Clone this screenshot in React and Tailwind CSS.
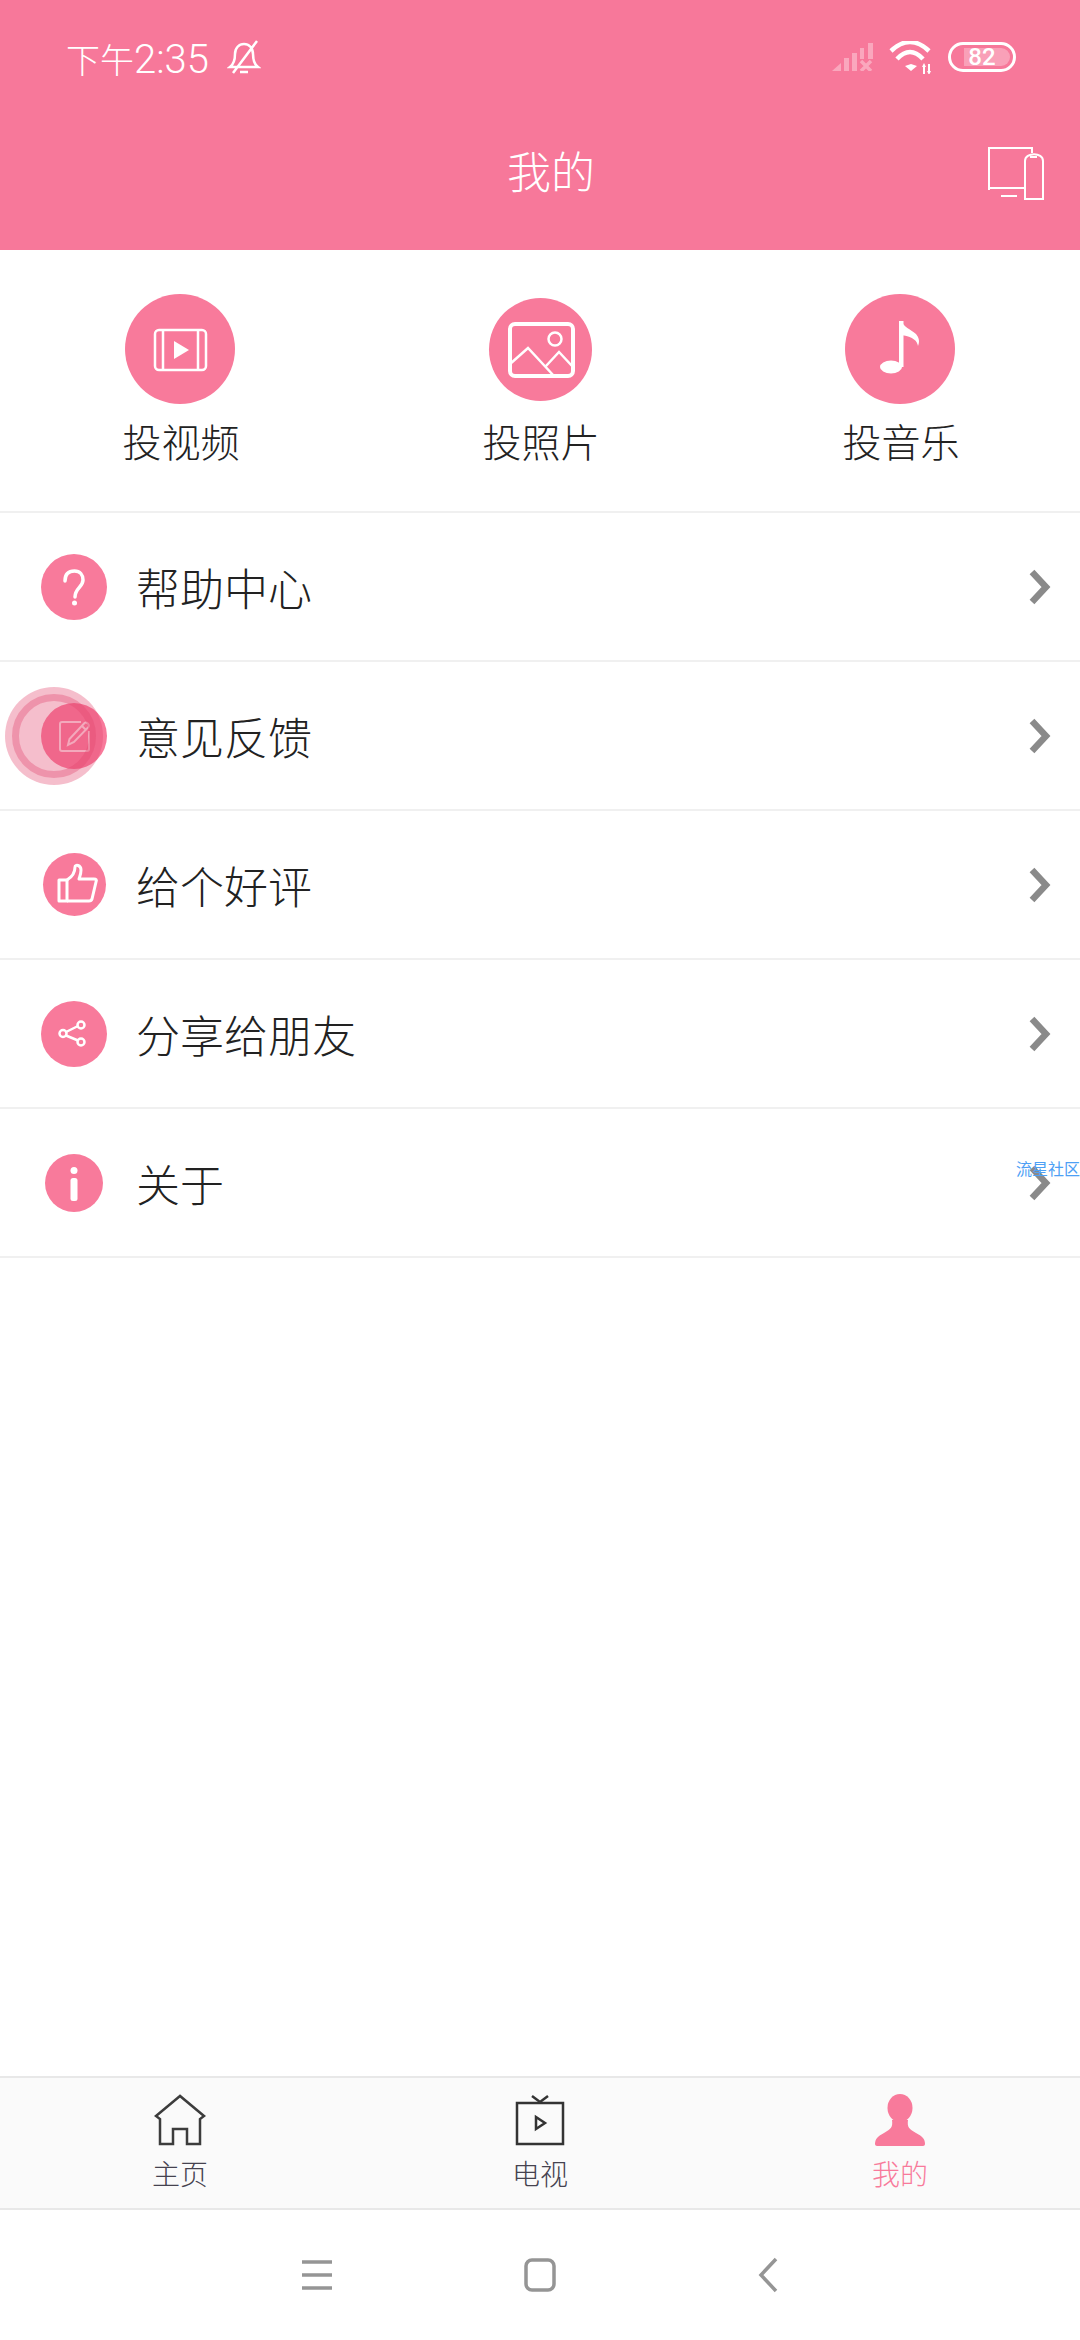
const cjk = "font-['Roboto','Noto_Sans_CJK_SC',sans-serif]";

const Chevron = () => (
  <svg width="24" height="36" viewBox="0 0 24 36" fill="none" stroke="#8a8a8a" strokeWidth="6.500">
    <path d="M4 3l14 15L4 33" />
  </svg>
);

const VideoIcon = () => (
  <svg width="110" height="110" viewBox="0 0 110 110" fill="none" stroke="#fff" strokeWidth="2.500">
    <rect x="30" y="36" width="51" height="40" rx="4" />
    <path d="M38 36v40M73 36v40" />
    <path d="M49 47l15 9-15 9z" fill="#fff" stroke="none" />
  </svg>
);

const PhotoIcon = () => (
  <svg width="103" height="103" viewBox="0 0 103 103" fill="none" stroke="#fff" strokeWidth="4">
    <rect x="21" y="26" width="63" height="52" rx="5" />
    <circle cx="66" cy="41" r="6.500" strokeWidth="2.500" />
    <path d="M21 66l18-16 26 28M57 68l13-14 14 15" strokeWidth="2.500" />
  </svg>
);

const MusicIcon = () => (
  <svg width="110" height="110" viewBox="0 0 110 110" fill="#fff">
    <ellipse cx="46" cy="73" rx="11" ry="6.500" />
    <path d="M54 27h4.500v46H54z" />
    <path d="M56 27c3 6 9 8 15 13 3 4 4 7 2 12-1-5-4-9-17-11z" />
  </svg>
);

const HelpIcon = () => (
  <svg width="66" height="66" viewBox="0 0 66 66" fill="none" stroke="#fff" strokeWidth="3.500" strokeLinecap="round">
    <path d="M24 27c0-7 4-10 9.500-10S42 21 42 26c0 7-8 8-8 17" />
    <circle cx="33.500" cy="49" r="2.500" fill="#fff" stroke="none" />
  </svg>
);

const EditIcon = () => (
  <svg width="66" height="66" viewBox="0 0 66 66" fill="none" stroke="#fcdfe6" strokeWidth="2">
    <path d="M40 19H21a2 2 0 0 0-2 2v25a2 2 0 0 0 2 2h25a2 2 0 0 0 2-2V28" />
    <path d="M27 42l1.500-6 15-16c2-1.500 5.500 1.500 4 4L33 39l-6 3zM41 23l4.500 4.500" />
  </svg>
);

const ThumbIcon = () => (
  <svg width="63" height="63" viewBox="0 0 63 63" fill="none" stroke="#fff" strokeWidth="3" strokeLinejoin="round">
    <path d="M16 27h8v21h-8z" />
    <path d="M24 27c5-3 8-7 8-13 0-3 6-2 6 3 0 4-1 6-2 9h15c2 0 3 1 2 3l-4 17c-.5 1.500-1 2-3 2H24" />
  </svg>
);

const ShareIcon = () => (
  <svg width="66" height="66" viewBox="0 0 66 66" fill="none" stroke="#fff" strokeWidth="2.500">
    <circle cx="22" cy="32.500" r="3.500" />
    <circle cx="40" cy="24" r="3.500" />
    <circle cx="40" cy="41" r="3.500" />
    <path d="M25 31l12-6M25 34.500l12 5" />
  </svg>
);

const InfoIcon = () => (
  <svg width="58" height="58" viewBox="0 0 58 58" fill="#fff">
    <circle cx="29" cy="16.500" r="3.500" />
    <rect x="25.500" y="24" width="7" height="23" rx="2.500" />
  </svg>
);

const actions = [
  { label: "投视频", size: "w-[110px] h-[110px]", icon: <VideoIcon /> },
  { label: "投照片", size: "w-[103px] h-[103px]", icon: <PhotoIcon /> },
  { label: "投音乐", size: "w-[110px] h-[110px]", icon: <MusicIcon /> },
];

const rows = [
  { label: "帮助中心", size: "w-[66px] h-[66px]", icon: <HelpIcon /> },
  { label: "意见反馈", size: "w-[66px] h-[66px]", icon: <EditIcon />, ripple: true },
  { label: "给个好评", size: "w-[63px] h-[63px]", icon: <ThumbIcon /> },
  { label: "分享给朋友", size: "w-[66px] h-[66px]", icon: <ShareIcon /> },
  { label: "关于", size: "w-[58px] h-[58px]", icon: <InfoIcon />, floating: true },
];

const tabs = [
  {
    label: "主页",
    color: "text-[#45424f]",
    icon: (
      <svg width="52" height="52" viewBox="0 0 52 52" fill="none" stroke="#3c3c3c" strokeWidth="2.500">
        <path d="M26 2L2 22l4 3v25h13V35h14v15h13V25l4-3z" />
      </svg>
    ),
  },
  {
    label: "电视",
    color: "text-[#45424f]",
    icon: (
      <svg width="52" height="52" viewBox="0 0 52 52" fill="none" stroke="#333" strokeWidth="2.500">
        <rect x="3" y="9" width="46" height="41" />
        <path d="M18 2l8 6 8-6M22 23l9 6-9 6z" />
      </svg>
    ),
  },
  {
    label: "我的",
    color: "text-[#f87a9b]",
    icon: (
      <svg width="52" height="52" viewBox="0 0 52 52" fill="#f87a9b">
        <ellipse cx="26" cy="14" rx="12.500" ry="14" />
        <path d="M18 26c1 7-1 9-8 13-6 3-9 6-9 11 0 1 1 2 2 2h46c1 0 2-1 2-2 0-5-3-8-9-11-7-4-9-6-8-13z" />
      </svg>
    ),
  },
];

const App = () => {
  return (
    <div className={`flex h-[2340px] w-[1080px] flex-col overflow-hidden bg-white ${cjk}`}>
      <header className="h-[250px] bg-[#f7789a] text-white">
        <div className="flex h-[114px] items-center justify-between pr-[64px] pl-[66px]">
          <div className="flex items-center gap-[18px]">
            <span className="mt-[6px] text-[40px] leading-[48px] font-light">
              <span className="text-[34px]">下午</span>2:35
            </span>
            <svg width="34" height="36" viewBox="0 0 34 36" fill="none" stroke="#fff" strokeWidth="2.500">
              <path d="M3 28c4-3 5-7 5-13 0-6 4-10 9-10s9 4 9 10c0 6 1 10 5 13zM13 33h8M6 34L30 2" />
            </svg>
          </div>
          <div className="flex items-center gap-[16px]">
            <svg width="41" height="28" viewBox="0 0 41 28" fill="#fff" fillOpacity="0.35">
              <path d="M0 28l9-8v8zM12 15h5v13h-5zM20 10h5v18h-5zM28 5h4v11h-4zM36 0h5v16h-5z" />
              <path d="M29 18l10 10M39 18L29 28" stroke="#fff" strokeOpacity="0.35" strokeWidth="3.500" />
            </svg>
            <svg width="43" height="33" viewBox="0 0 43 33" fill="none" stroke="#fff" strokeWidth="4.500">
              <path d="M2 10Q21-8 40 10M8 18Q21 4 34 18" />
              <path d="M16 25l6-2 6 2-6 5z" fill="#fff" stroke="none" />
              <path d="M35 25v8M40 23v8" strokeWidth="2" />
              <path d="M33 26l2-4 2 4zM38 30l2 4 2-4z" fill="#fff" stroke="none" />
            </svg>
            <div className="relative flex h-[30px] w-[68px] items-center justify-center rounded-full border-[3px] border-white">
              <div className="absolute top-[3px] right-[3px] bottom-[3px] left-[13px] rounded-r-full bg-white/30" />
              <span className="relative text-[24px] leading-none font-medium">82</span>
            </div>
          </div>
        </div>
        <div className="grid grid-cols-[1fr_auto_1fr] items-center pr-[36px]">
          <div />
          <h1 className="ml-[58px] text-[44px] leading-[120px] font-light">我的</h1>
          <div className="flex justify-end">
            <svg width="56" height="54" viewBox="0 0 56 54" fill="none" stroke="#fff" strokeWidth="2">
              <path d="M44 6V1H1v40h36M1 38v5M13 49h16" />
              <path d="M37 14c0-9 18-9 18 0v38H37zM42 10h7" />
            </svg>
          </div>
        </div>
      </header>

      <section className="grid h-[263px] grid-cols-3 border-b-2 border-[#f0f0f0]">
        {actions.map((item) => (
          <div key={item.label} className="flex flex-col items-center pt-[44px]">
            <div className="flex h-[110px] items-center">
              <div className={`flex items-center justify-center rounded-full bg-[#f87a9b] ${item.size}`}>{item.icon}</div>
            </div>
            <span className="mt-[15px] ml-[2px] text-[39px] leading-[50px] font-light text-[#222]">{item.label}</span>
          </div>
        ))}
      </section>

      <ul>
        {rows.map((row) => (
          <li key={row.label} className="relative flex h-[149px] items-center border-b-2 border-[#f0f0f0] pr-[28px] pl-[24px]">
            <div className="flex w-[100px] justify-center">
              <div className={`flex items-center justify-center rounded-full bg-[#f87a9b] ${row.size}`}>{row.icon}</div>
            </div>
            <span className="mt-[8px] ml-[12px] flex-1 text-[44px] font-light text-[#222]">{row.label}</span>
            <Chevron />
            {row.ripple && (
              <div className="absolute top-[25px] left-[5px] flex h-[98px] w-[98px] items-center justify-center rounded-full bg-[#e2466e]/35">
                <div className="h-[84px] w-[84px] rounded-full border-[7px] border-[#e2466e]/35" />
              </div>
            )}
            {row.floating && (
              <span className="absolute top-[50px] left-[1016px] text-[16px] leading-[22px] whitespace-nowrap text-[#4da0f5]">流星社区</span>
            )}
          </li>
        ))}
      </ul>

      <div className="flex-1" />

      <nav className="grid h-[134px] grid-cols-3 border-y-2 border-[#e8e8e8] bg-[#fafafa]">
        {tabs.map((tab) => (
          <div key={tab.label} className="flex flex-col items-center pt-[16px]">
            {tab.icon}
            <span className={`mt-[10px] text-[28px] leading-[40px] font-light ${tab.color}`}>{tab.label}</span>
          </div>
        ))}
      </nav>

      <div className="flex h-[130px] items-center justify-center">
        <svg width="480" height="36" viewBox="0 0 480 36" fill="none" stroke="#959595" strokeWidth="3.500">
          <path d="M2 5h30M2 18h30M2 31h30" />
          <rect x="226" y="3" width="28" height="30" rx="6" />
          <path d="M476 2L461 18l15 16" />
        </svg>
      </div>
    </div>
  );
};

export default App;
